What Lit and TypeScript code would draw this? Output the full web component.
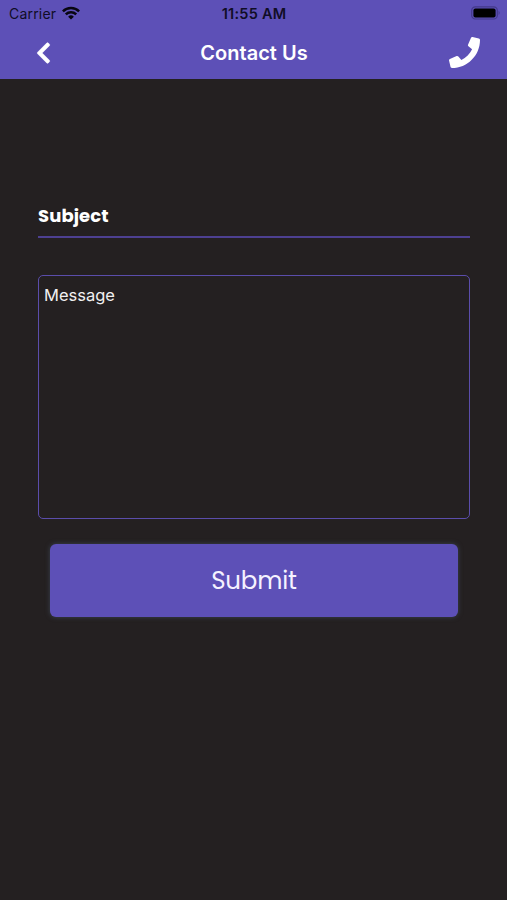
import { LitElement, html, css } from "lit";
import { customElement } from "lit/decorators.js";

@customElement("status-bar")
class StatusBar extends LitElement {
  static styles = css`
    :host {
      display: grid;
      grid-template-columns: 1fr auto 1fr;
      align-items: center;
      height: 26px;
      padding: 1px 6px 0 9px;
      box-sizing: border-box;
      color: #100d26;
      font: 14px/20px Inter, sans-serif;
    }
    .left { display: flex; align-items: center; gap: 6px; }
    .carrier { letter-spacing: 0.2px; }
    .time { font-weight: 600; font-size: 14.5px; letter-spacing: 0.25px; margin-left: -2px; }
    .wifi { width: 18px; height: 14px; margin-top: -2px; }
    .battery { width: 30px; height: 14px; justify-self: end; margin-top: -1px; }
  `;
  render() {
    return html`
      <div class="left">
        <span class="carrier">Carrier</span>
        <svg class="wifi" viewBox="0 0 18 14" fill="none" stroke="#080611" stroke-width="2.5">
          <path d="M0.9 5.3a11.6 11.6 0 0 1 16.2 0" />
          <path d="M3.8 8.4a7.4 7.4 0 0 1 10.4 0" />
          <path d="M9 13.6L6.1 10.7a4.1 4.1 0 0 1 5.8 0z" fill="#080611" stroke="none" />
        </svg>
      </div>
      <span class="time">11:55 AM</span>
      <svg class="battery" viewBox="0 0 30 14">
        <rect x="0.7" y="0.8" width="25.6" height="12.2" rx="3.6" fill="none" stroke="#43398a" stroke-width="1.2" />
        <rect x="2.4" y="2.4" width="22.2" height="9" rx="2" fill="#000" />
        <path d="M27.6 4.8q2 2.1 0 4.2z" fill="#43398a" />
      </svg>
    `;
  }
}

@customElement("nav-bar")
class NavBar extends LitElement {
  static styles = css`
    :host {
      display: grid;
      grid-template-columns: 1fr auto 1fr;
      align-items: center;
      height: 53px;
      box-sizing: border-box;
      padding: 0 27px 0 36px;
      color: #fff;
    }
    .title { font: 600 20px/26px Inter, sans-serif; letter-spacing: 0.05px; margin-left: -8px; }
    .back { width: 15px; height: 24px; }
    .phone { width: 31px; height: 31px; justify-self: end; }
  `;
  render() {
    return html`
      <svg class="back" viewBox="0 0 320 512" fill="currentColor">
        <path d="M34.52 239.03L228.87 44.69c9.37-9.37 24.57-9.37 33.94 0l22.67 22.67c9.36 9.36 9.37 24.52.04 33.9L131.49 256l154.02 154.75c9.34 9.38 9.32 24.54-.04 33.9l-22.67 22.67c-9.37 9.37-24.57 9.37-33.94 0L34.52 272.97c-9.37-9.37-9.37-24.57 0-33.94z" stroke="currentColor" stroke-width="12" />
      </svg>
      <span class="title">Contact Us</span>
      <svg class="phone" viewBox="0 0 512 512" fill="currentColor">
        <path d="M493.4 24.6l-104-24c-11.3-2.6-22.9 3.3-27.5 13.9l-48 112c-4.2 9.8-1.4 21.3 6.9 28l60.6 49.6c-36 76.7-98.9 140.5-177.2 177.2l-49.6-60.6c-6.8-8.3-18.2-11.1-28-6.9l-112 48C3.9 366.5-2 378.1.6 389.4l24 104C27.1 504.2 36.7 512 48 512c256.1 0 464-207.5 464-464 0-11.2-7.7-20.9-18.6-23.4z" />
      </svg>
    `;
  }
}

@customElement("app-root")
class AppRoot extends LitElement {
  static styles = css`
    :host {
      display: flex;
      flex-direction: column;
      height: 100vh;
      background: #242021;
      color: #fff;
    }
    .header { background: #5d50b7; }
    .form {
      display: flex;
      flex-direction: column;
      padding: 123px 37px 0 38px;
    }
    .subject {
      height: 36px;
      box-sizing: border-box;
      border-bottom: 2px solid #4d4091;
      font: 700 18px/27px Poppins, Inter, sans-serif;
      letter-spacing: 0.1px;
    }
    .message {
      height: 244px;
      box-sizing: border-box;
      margin-top: 37px;
      padding: 7px 5px;
      border: 1px solid #5b4dab;
      border-radius: 5px;
      font: 16.5px/24px Inter, sans-serif;
      color: #f1f0f1;
    }
    .submit {
      height: 73px;
      margin: 24.5px 12px 0;
      border: 0;
      padding: 0;
      border-radius: 6px;
      background: #5d50b7;
      box-shadow: 0 0 5px #3c4350;
      color: #f5f2ff;
      font: 400 24.5px/73px Poppins, Inter, sans-serif;
      letter-spacing: -0.2px;
    }
  `;
  render() {
    return html`
      <div class="header">
        <status-bar></status-bar>
        <nav-bar></nav-bar>
      </div>
      <div class="form">
        <div class="subject">Subject</div>
        <div class="message">Message</div>
        <button class="submit">Submit</button>
      </div>
    `;
  }
}
